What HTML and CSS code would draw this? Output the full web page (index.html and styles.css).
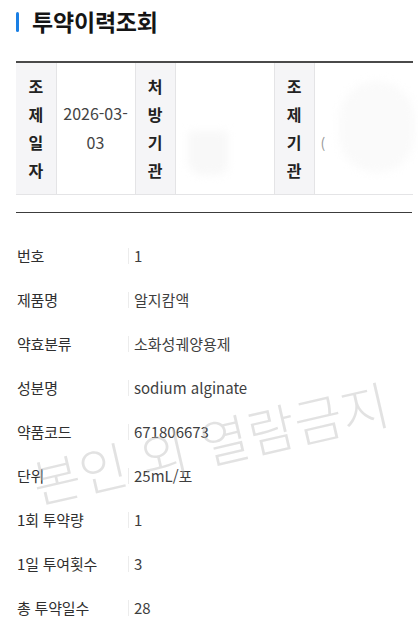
FILE: index.html
```html
<!DOCTYPE html>
<html lang="ko">
<head>
<meta charset="utf-8">
<link rel="stylesheet" href="styles.css">
</head>
<body>
<div class="page">
  <h1 class="title"><span class="title-bar"></span>투약이력조회</h1>

  <table class="summary">
    <tr>
      <th class="hd">조제일자</th>
      <td class="val date">2026-03-03</td>
      <th class="hd">처방기관</th>
      <td class="val wide"><span class="blur blur-a"></span></td>
      <th class="hd">조제기관</th>
      <td class="val wide"><span class="paren">(</span><span class="blur blur-b"></span></td>
    </tr>
  </table>

  <div class="detail">
    <div class="row"><span class="label">번호</span><span class="value">1</span></div>
    <div class="row"><span class="label">제품명</span><span class="value">알지캄액</span></div>
    <div class="row"><span class="label">약효분류</span><span class="value">소화성궤양용제</span></div>
    <div class="row"><span class="label">성분명</span><span class="value">sodium alginate</span></div>
    <div class="row"><span class="label">약품코드</span><span class="value">671806673</span></div>
    <div class="row"><span class="label">단위</span><span class="value">25mL/포</span></div>
    <div class="row"><span class="label">1회 투약량</span><span class="value">1</span></div>
    <div class="row"><span class="label">1일 투여횟수</span><span class="value">3</span></div>
    <div class="row"><span class="label">총 투약일수</span><span class="value">28</span></div>
  </div>

  <div class="watermark">본인 외 열람금지</div>
</div>
</body>
</html>
```

FILE: styles.css
```css
* { box-sizing: border-box; }
html, body { margin: 0; padding: 0; background: #fff; }
body {
  font-family: "Noto Sans CJK KR", "Noto Sans", sans-serif;
  color: #333;
  width: 418px;
  height: 644px;
  overflow: hidden;
}
.page {
  position: relative;
  padding: 0 6px 0 16px;
  height: 644px;
}
.title {
  display: flex;
  align-items: flex-start;
  gap: 13px;
  margin: 0;
  padding-top: 6px;
  height: 61px;
  font-size: 23px;
  font-weight: 700;
  color: #151515;
  line-height: 30px;
  letter-spacing: -0.2px;
}
.title-bar {
  display: block;
  width: 3px;
  height: 20px;
  margin-top: 6px;
  border-radius: 2px;
  background: #1a7fe4;
}
.summary {
  width: 396px;
  border-collapse: collapse;
  border-top: 2px solid #4a4a4a;
  table-layout: fixed;
}
.summary th, .summary td {
  border: 1px solid #e4e4e6;
  border-top: none;
  padding: 0;
  height: 132px;
}
.summary th:first-child { border-left: none; }
.summary td:last-child { border-right: none; }
.hd {
  width: 40px;
  background: #f5f5f7;
  font-size: 16px;
  font-weight: 700;
  color: #222;
  line-height: 28px;
  word-break: break-all;
  padding: 0 12px !important;
  text-align: center;
}
.val {
  font-size: 16px;
  color: #444;
  text-align: center;
  line-height: 29px;
  position: relative;
}
.date { width: 79px; padding: 0 4px !important; }
.wide { width: 99px; }
.blur {
  position: absolute;
  background: #f8f8f8;
  filter: blur(4px);
}
.blur-a { left: 12px; top: 68px; width: 40px; height: 44px; border-radius: 4px 4px 10px 14px; }
.blur-b { left: 24px; top: 18px; width: 76px; height: 92px; border-radius: 40px; background: #fafafa; }
.paren {
  position: absolute;
  left: 6px;
  top: 66px;
  font-size: 14px;
  color: #999;
}
.detail {
  margin-top: 17px;
  border-top: 1px solid #3c3c3c;
  padding-top: 21px;
}
.row {
  display: flex;
  align-items: center;
  height: 44px;
  font-size: 15px;
  line-height: 22px;
}
.label {
  width: 113px;
  padding-left: 1px;
  color: #2f2f2f;
  letter-spacing: -0.2px;
  position: relative;
}
.label::after {
  content: "";
  position: absolute;
  right: 0;
  top: 3px;
  width: 1px;
  height: 16px;
  background: #ececec;
}
.value {
  padding-left: 5px;
  color: #3e3e3e;
}
.watermark {
  position: absolute;
  left: 22px;
  top: 404px;
  width: 376px;
  text-align: center;
  font-size: 52px;
  font-weight: 300;
  color: rgba(190, 190, 190, 0.45);
  transform: rotate(-13deg);
  white-space: nowrap;
  pointer-events: none;
}
```
